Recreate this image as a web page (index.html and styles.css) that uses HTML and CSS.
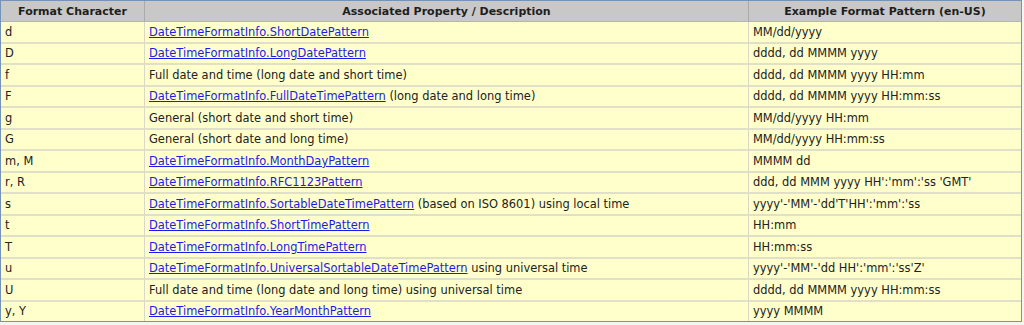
FILE: index.html
```html
<!DOCTYPE html>
<html lang="en">
<head>
  <meta charset="UTF-8">
  <title>Standard DateTime Format Strings</title>
  <link rel="stylesheet" href="styles.css">
</head>
<body>
  <table class="format-table">
    <colgroup>
      <col class="col-char">
      <col class="col-desc">
      <col class="col-pattern">
    </colgroup>
    <thead>
      <tr>
        <th>Format Character</th>
        <th>Associated Property / Description</th>
        <th>Example Format Pattern (en-US)</th>
      </tr>
    </thead>
    <tbody>
      <tr>
        <td>d</td>
        <td><a href="#">DateTimeFormatInfo.ShortDatePattern</a></td>
        <td>MM/dd/yyyy</td>
      </tr>
      <tr>
        <td>D</td>
        <td><a href="#">DateTimeFormatInfo.LongDatePattern</a></td>
        <td>dddd, dd MMMM yyyy</td>
      </tr>
      <tr>
        <td>f</td>
        <td>Full date and time (long date and short time)</td>
        <td>dddd, dd MMMM yyyy HH:mm</td>
      </tr>
      <tr>
        <td>F</td>
        <td><a href="#">DateTimeFormatInfo.FullDateTimePattern</a> (long date and long time)</td>
        <td>dddd, dd MMMM yyyy HH:mm:ss</td>
      </tr>
      <tr>
        <td>g</td>
        <td>General (short date and short time)</td>
        <td>MM/dd/yyyy HH:mm</td>
      </tr>
      <tr>
        <td>G</td>
        <td>General (short date and long time)</td>
        <td>MM/dd/yyyy HH:mm:ss</td>
      </tr>
      <tr>
        <td>m, M</td>
        <td><a href="#">DateTimeFormatInfo.MonthDayPattern</a></td>
        <td>MMMM dd</td>
      </tr>
      <tr>
        <td>r, R</td>
        <td><a href="#">DateTimeFormatInfo.RFC1123Pattern</a></td>
        <td>ddd, dd MMM yyyy HH':'mm':'ss 'GMT'</td>
      </tr>
      <tr>
        <td>s</td>
        <td><a href="#">DateTimeFormatInfo.SortableDateTimePattern</a> (based on ISO 8601) using local time</td>
        <td>yyyy'-'MM'-'dd'T'HH':'mm':'ss</td>
      </tr>
      <tr>
        <td>t</td>
        <td><a href="#">DateTimeFormatInfo.ShortTimePattern</a></td>
        <td>HH:mm</td>
      </tr>
      <tr>
        <td>T</td>
        <td><a href="#">DateTimeFormatInfo.LongTimePattern</a></td>
        <td>HH:mm:ss</td>
      </tr>
      <tr>
        <td>u</td>
        <td><a href="#">DateTimeFormatInfo.UniversalSortableDateTimePattern</a> using universal time</td>
        <td>yyyy'-'MM'-'dd HH':'mm':'ss'Z'</td>
      </tr>
      <tr>
        <td>U</td>
        <td>Full date and time (long date and long time) using universal time</td>
        <td>dddd, dd MMMM yyyy HH:mm:ss</td>
      </tr>
      <tr>
        <td>y, Y</td>
        <td><a href="#">DateTimeFormatInfo.YearMonthPattern</a></td>
        <td>yyyy MMMM</td>
      </tr>
    </tbody>
  </table>
</body>
</html>
```

FILE: styles.css
```css
body {
  margin: 0;
  padding: 0;
  background-color: #f4f4f4;
  font-family: "DejaVu Sans", Verdana, sans-serif;
  font-size: 11px;
  color: #222;
}
.format-table {
  width: 1022px;
  table-layout: fixed;
  border-collapse: separate;
  border-spacing: 0;
  border: 1px solid #7393b7;
  background-color: #ffffcc;
}
.col-char {
  width: 144px;
}
.col-desc {
  width: 604px;
}
.format-table th {
  height: 20px;
  padding: 0 4px;
  background-color: #c8c8c8;
  color: #1e1e1e;
  font-weight: bold;
  text-align: center;
  border-right: 1px solid #aaa;
  border-bottom: 1px solid #b4b4b4;
}
.format-table td {
  height: 19.5px;
  padding: 0 4px;
  font-size: 11.45px;
  text-align: left;
  white-space: nowrap;
  border-right: 1px solid #d8d8c4;
  border-bottom: 2px solid #e0e0c8;
}
.format-table th:last-child,
.format-table td:last-child {
  border-right: none;
}
.format-table tr:last-child td {
  border-bottom: none;
}
.format-table a {
  color: #1c1ce6;
  text-decoration: underline;
}
```
